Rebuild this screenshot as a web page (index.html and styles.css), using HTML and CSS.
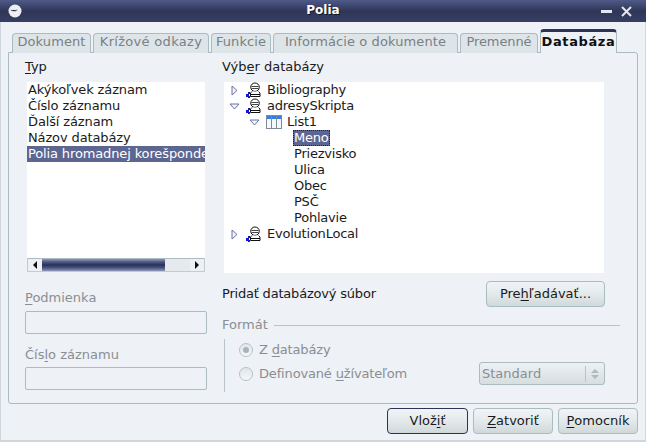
FILE: index.html
```html
<!DOCTYPE html>
<html lang="sk">
<head>
<meta charset="utf-8">
<title>Polia</title>
<link rel="stylesheet" href="styles.css">
</head>
<body>
<svg class="defs" width="0" height="0" aria-hidden="true">
  <symbol id="db" viewBox="0 0 16 16">
    <ellipse cx="10" cy="5.200" rx="4.300" ry="4.200" fill="#fff" stroke="#111" stroke-width="1"/>
    <path d="M6.500 4.500h7M6.500 6.500h7" stroke="#444" stroke-width="1"/>
    <path d="M7 9.500l-1.500 1.500v3.500h9.500v-3.500l-1.500-1.500M5.500 12.500h9.500" fill="#fff" stroke="#111" stroke-width="1"/>
    <rect x="1" y="12" width="3" height="3" fill="#1414c8"/>
    <rect x="3" y="10" width="2" height="2" fill="#1414c8"/>
    <rect x="3" y="14" width="2" height="2" fill="#1414c8"/>
  </symbol>
  <symbol id="table" viewBox="0 0 16 14">
    <rect x=".5" y=".5" width="15" height="13" fill="#f4f7fb" stroke="#7e8a96"/>
    <rect x="1" y="1" width="14" height="3" fill="#2f7fe6"/>
    <path d="M5.500 1v12M10.500 1v12" stroke="#7e8a96"/>
  </symbol>
</svg>
<div class="window">
  <header class="titlebar">
    <svg class="app-icon" width="14" height="14" viewBox="0 0 14 14" aria-hidden="true">
      <circle cx="7" cy="7" r="6.500" fill="#eef0f4"/>
      <path d="M2.500 5.500c1.500 1 2.500 1 3.500.3 1 .7 2 .6 3.500-.6-.8 1.800-2.300 2.400-3.500 1.800-1.200.5-2.700.2-3.500-1.500z" fill="#2a2e44"/>
    </svg>
    <span class="title">Polia</span>
    <div class="controls">
      <span class="minimize"></span>
      <svg class="close" width="11" height="11" viewBox="0 0 11 11" aria-hidden="true"><path d="M1 1l9 9M10 1l-9 9" stroke="#e4e7f0" stroke-width="2"/></svg>
    </div>
  </header>
  <main class="body">
    <nav class="tabs">
      <span class="tab tab-dokument">Dokument</span>
      <span class="tab tab-krizove">Krížové odkazy</span>
      <span class="tab tab-funkcie">Funkcie</span>
      <span class="tab tab-info">Informácie o dokumente</span>
      <span class="tab tab-premenne">Premenné</span>
      <span class="tab tab-active">Databáza</span>
    </nav>
    <section class="panel">
      <div class="col-left">
        <div class="label"><u>T</u>yp</div>
        <div class="listwrap">
          <ul class="list">
            <li>Akýkoľvek záznam</li>
            <li>Číslo záznamu</li>
            <li>Ďalší záznam</li>
            <li>Názov databázy</li>
            <li class="selected">Polia hromadnej korešpondencie</li>
          </ul>
          <div class="scrollbar">
            <span class="sb-btn"><i class="arrow-left"></i></span>
            <span class="sb-track"><span class="sb-thumb"></span></span>
            <span class="sb-btn"><i class="arrow-right"></i></span>
          </div>
        </div>
        <div class="label disabled cond-label"><u>P</u>odmienka</div>
        <div class="field cond-field"></div>
        <div class="label disabled num-label">Čís<u>l</u>o záznamu</div>
        <div class="field num-field"></div>
      </div>
      <div class="col-right">
        <div class="label">Výb<u>e</u>r databázy</div>
        <div class="tree">
          <div class="row"><svg class="tw" width="7" height="11" viewBox="0 0 7 11"><path d="M1 1l5 4.500-5 4.500z" fill="#eef1f8" stroke="#6d75a0"/></svg><svg class="ico" width="16" height="16"><use href="#db"/></svg><span class="t">Bibliography</span></div>
          <div class="row"><svg class="tw twd" width="11" height="7" viewBox="0 0 11 7"><path d="M1 1l4.500 5 4.500-5z" fill="#eef1f8" stroke="#6d75a0"/></svg><svg class="ico" width="16" height="16"><use href="#db"/></svg><span class="t">adresySkripta</span></div>
          <div class="row lvl2"><svg class="tw twd" width="11" height="7" viewBox="0 0 11 7"><path d="M1 1l4.500 5 4.500-5z" fill="#eef1f8" stroke="#6d75a0"/></svg><svg class="ico-table" width="16" height="14"><use href="#table"/></svg><span class="t">List1</span></div>
          <div class="row lvl3"><span class="t cursor">Meno</span></div>
          <div class="row lvl3"><span class="t">Priezvisko</span></div>
          <div class="row lvl3"><span class="t">Ulica</span></div>
          <div class="row lvl3"><span class="t">Obec</span></div>
          <div class="row lvl3"><span class="t">PSČ</span></div>
          <div class="row lvl3"><span class="t">Pohlavie</span></div>
          <div class="row"><svg class="tw" width="7" height="11" viewBox="0 0 7 11"><path d="M1 1l5 4.500-5 4.500z" fill="#eef1f8" stroke="#6d75a0"/></svg><svg class="ico" width="16" height="16"><use href="#db"/></svg><span class="t">EvolutionLocal</span></div>
        </div>
        <div class="addrow">
          <span class="addlabel">Pridať databázový súbor</span>
          <span class="btn browse">Pre<u>h</u>ľadávať...</span>
        </div>
        <div class="format-head"><span>Formát</span><span class="rule"></span></div>
        <div class="format-body">
          <div class="radio-row"><span class="radio on"></span><span class="rl">Z <u>d</u>atabázy</span></div>
          <div class="radio-row second"><span class="radio"></span><span class="rl">Definované <u>u</u>žívateľom</span>
            <span class="select"><span>Standard</span><span class="spin"><i class="up"></i><i class="down"></i></span></span>
          </div>
        </div>
      </div>
    </section>
    <footer class="footer">
      <span class="btn default">Vlož<u>i</u>ť</span>
      <span class="btn close-btn"><u>Z</u>atvoriť</span>
      <span class="btn help"><u>P</u>omocník</span>
    </footer>
  </main>
</div>
</body>
</html>
```
FILE: styles.css
```css
* { box-sizing: border-box; }
html, body { margin: 0; padding: 0; }
body { width: 646px; height: 442px; overflow: hidden; background: #2b3050; font: 13px/16px "DejaVu Sans", sans-serif; color: #1a1a1a; }
.defs { position: absolute; }
.window { width: 646px; height: 442px; display: flex; flex-direction: column; }
u { text-underline-offset: 2px; text-decoration-thickness: 1px; }

.titlebar { height: 22px; flex: none; display: flex; align-items: center; position: relative; padding: 0 8px; background: linear-gradient(#4f5a88, #2f3658 50%, #363e62); }
.title { position: absolute; left: 0; right: 0; top: 2px; text-align: center; color: #fff; font-weight: 700; font-size: 12px; text-shadow: 1px 1px 0 #14182c; }
.controls { margin-left: auto; display: flex; align-items: center; gap: 9px; padding-right: 6px; }
.minimize { width: 11px; height: 3px; background: #e4e7f0; margin-top: 1px; }

.body { flex: 1; display: flex; flex-direction: column; background: #eef1f6; border: solid #cfd6dc; border-width: 0 1px 2px; padding: 8px 7px 0; }
.tabs { display: flex; height: 23px; padding-left: 4px; align-items: flex-end; position: relative; z-index: 1; margin-bottom: -1px; flex: none; }
.tab { height: 20px; margin-right: 2px; text-align: center; color: #7a8084; background: #dde5e8; border: 1px solid #aabcbe; border-bottom: 0; border-radius: 4px 4px 0 0; white-space: nowrap; letter-spacing: .1px; }
.tab-dokument { width: 79px; }
.tab-krizove { width: 116px; letter-spacing: .3px; }
.tab-funkcie { width: 60px; }
.tab-info { width: 185px; }
.tab-premenne { width: 78px; letter-spacing: -.1px; }
.tab-active { width: 77px; height: 24px; padding-top: 2px; margin-right: 0; font-weight: 700; color: #111; background: #eef1f6; border-top: 3px solid #2c3358; letter-spacing: .6px; }

.panel { flex: none; height: 352px; width: 630px; border: 1px solid #aabcbe; border-radius: 0 3px 3px 3px; padding: 6px 0 0 16px; display: flex; gap: 15px; }
.col-left { width: 182px; flex: none; }
.col-right { width: 398px; flex: none; }
.label { height: 16px; }
.disabled { color: #8a8e92; }
.listwrap { margin: 7px 2px 0; height: 190px; display: flex; flex-direction: column; }
.list { list-style: none; margin: 0; padding: 0; flex: 1; background: #fff; overflow: hidden; letter-spacing: -.13px; }
.list li { height: 16px; white-space: nowrap; padding-left: 1px; }
.list .selected { background: #5c6691; color: #fff; }
.scrollbar { height: 14px; flex: none; display: flex; background: #e6eaee; border: 1px solid #c0ccd0; border-top-color: #aebcc2; }
.sb-btn { width: 14px; flex: none; display: flex; align-items: center; justify-content: center; background: #eef1f4; }
.arrow-left { border: 4px solid transparent; border-left: 0; border-right: 4px solid #111; }
.arrow-right { border: 4px solid transparent; border-right: 0; border-left: 4px solid #111; }
.sb-track { flex: 1; display: block; }
.sb-thumb { display: block; width: 123px; height: 100%; background: linear-gradient(#8f98b8, #4d5782 25%, #2a3158 50%, #4d5782 75%, #8f98b8); }
.field { height: 23px; border: 1px solid #aabcbe; border-radius: 2px; background: #eef1f6; }
.cond-label { margin-top: 18px; }
.cond-field { margin-top: 5px; }
.num-label { margin-top: 13px; }
.num-field { margin-top: 4px; }

.tree { margin: 7px 16px 0 2px; height: 191px; background: #fff; overflow: hidden; letter-spacing: -.22px; }
.row { height: 16px; display: flex; align-items: center; white-space: nowrap; position: relative; padding-left: 21px; }
.tw { position: absolute; left: 7px; top: 3px; }
.twd { left: 5px; top: 5px; }
.ico { flex: none; margin-right: 6px; }
.lvl2 { padding-left: 42px; }
.lvl2 .tw { left: 25px; }
.ico-table { flex: none; margin-right: 5px; }
.lvl3 { padding-left: 70px; }
.cursor { background: #5c6691; color: #fff; outline: 1px dotted #20242e; outline-offset: -1px; padding: 0 1px; margin: 0 -1px; }

.addrow { display: flex; align-items: center; justify-content: space-between; margin: 8px 15px 0 0; height: 26px; }
.addlabel { letter-spacing: -.2px; }
.btn { display: flex; align-items: center; justify-content: center; height: 26px; border: 1px solid #aabcbe; border-radius: 4px; background: linear-gradient(#f1f4f6, #e2e8ea 55%, #cfd8da); white-space: nowrap; }
.browse { width: 119px; }
.format-head { display: flex; align-items: center; margin-top: 10px; height: 16px; color: #8a8e92; }
.rule { flex: 1; height: 1px; background: #b8c4c8; margin-left: 6px; }
.format-body { margin: 6px 0 0 2px; height: 53px; border-left: 1px solid #b8c4c8; padding-top: 3px; color: #8a8e92; }
.rl { letter-spacing: -.16px; }
.radio-row { height: 16px; display: flex; align-items: center; gap: 6px; padding-left: 14px; }
.second { height: 23px; margin-top: 4px; padding-right: 15px; }
.radio { width: 14px; height: 14px; border-radius: 50%; border: 1px solid #b4c2c6; background: linear-gradient(#dfe6ea, #f6f8fa); position: relative; flex: none; }
.on::after { content: ""; position: absolute; inset: 3px; border-radius: 50%; background: #a9b4b8; }
.select { margin-left: auto; width: 126px; height: 23px; border: 1px solid #aabcbe; border-radius: 3px; display: flex; align-items: center; justify-content: space-between; padding: 0 5px 0 2px; background: linear-gradient(#eef1f4, #d6dee0); color: #8a8e92; }
.spin { display: flex; flex-direction: column; gap: 2px; border-left: 1px solid #b8c4c8; padding-left: 5px; height: 16px; justify-content: center; }
.up { border: 4px solid transparent; border-top: 0; border-bottom: 4px solid #aabcbe; }
.down { border: 4px solid transparent; border-bottom: 0; border-top: 4px solid #aabcbe; }

.footer { display: flex; justify-content: flex-end; gap: 5px; margin-top: 4px; }
.default { width: 81px; border-color: #2c3358; }
.close-btn { width: 80px; }
.help { width: 80px; }
```
